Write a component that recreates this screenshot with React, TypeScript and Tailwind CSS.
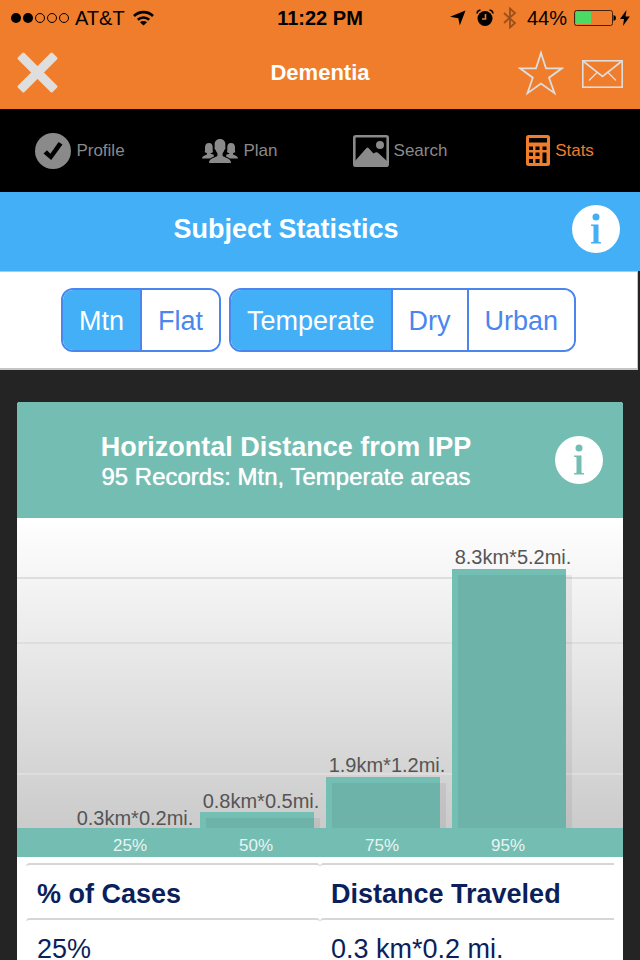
import { useState } from "react";

const tabs = [
  { name: "Profile", icon: ProfileIcon },
  { name: "Plan", icon: PlanIcon },
  { name: "Search", icon: SearchIcon },
  { name: "Stats", icon: StatsIcon },
];

const bars = [
  { x: 57, top: 310, label: "0.3km*0.2mi.", labelY: 307, tick: "25%" },
  { x: 183, top: 294, label: "0.8km*0.5mi.", labelY: 290, tick: "50%" },
  { x: 309, top: 259, label: "1.9km*1.2mi.", labelY: 254, tick: "75%" },
  { x: 435, top: 51, label: "8.3km*5.2mi.", labelY: 46, tick: "95%" },
];

const gridLines = [60, 125, 190, 256];
const BASE = 310;

const rows = [{ cases: "25%", distance: "0.3 km*0.2 mi." }];

function ProfileIcon() {
  return (
    <svg width="36" height="36" viewBox="0 0 36 36" aria-hidden="true">
      <circle cx="18" cy="18" r="18" fill="currentColor" />
      <path d="M8.500 20.500l3.500-3.300 3.400 3.500L23.600 9l3.900 2.600L16.200 27z" fill="#000" />
    </svg>
  );
}

function PlanIcon() {
  return (
    <svg width="36" height="24" viewBox="0 0 36 24" fill="currentColor" aria-hidden="true">
      <path d="M7 4c-2.800 0-4 1.800-4 4.500 0 1.700.2 3.300-.3 4.500.8.600 1.500.8 2.300 1v1.200C3.500 16.500.3 16.500 0 19.500h8c1.200-1 2.500-1.300 3.800-1.800v-2L8.700 14.800V14c.8 0 1.800-.4 2.300-1-.5-1.200-.3-2.800-.3-4.500C10.700 5.800 9.800 4 7 4z" />
      <path d="M29 4c2.800 0 4 1.800 4 4.500 0 1.700-.2 3.300.3 4.500-.8.600-1.500.8-2.300 1v1.200c1.500 1.300 4.700 1.300 5 4.300h-8c-1.200-1-2.500-1.300-3.800-1.800v-2l3.100-.9V14c-.8 0-1.800-.4-2.300-1 .5-1.200.3-2.800.3-4.500C25.300 5.800 26.200 4 29 4z" />
      <path d="M18 0c-3.700 0-5.400 2.500-5.400 5.800 0 .8.100 1.500.2 2.200-.9.600 0 2.700.9 3 .4 1.400.9 2.300 1.700 3.200v2.700C13.500 18.700 7 18.700 7 24h22c0-5.300-6.500-5.300-8.400-7.100v-2.700c.8-.9 1.300-1.800 1.700-3.200.9-.3 1.800-2.400.9-3 .1-.7.200-1.400.2-2.200C23.400 2.500 21.700 0 18 0z" />
    </svg>
  );
}

function SearchIcon() {
  return (
    <svg width="36" height="32" viewBox="0 0 36 32" aria-hidden="true">
      <rect x="1.300" y="1.300" width="33.400" height="29.400" rx="1.500" fill="none" stroke="currentColor" strokeWidth="2.600" />
      <circle cx="27" cy="10" r="4" fill="currentColor" />
      <path d="M2 26l11.500-13q1-1 2 0l5 5.500q1.500-1 2.500-1.300 1.300-.3 2.500 1L34 26v5H2z" fill="currentColor" />
    </svg>
  );
}

function StatsIcon() {
  return (
    <svg width="24" height="31" viewBox="0 0 24 31" aria-hidden="true">
      <rect width="24" height="31" rx="2.500" fill="currentColor" />
      <g fill="#000">
        <rect x="3" y="3" width="18" height="4.500" />
        <rect x="3" y="11.500" width="4" height="3.500" />
        <rect x="9.500" y="11.500" width="4" height="3.500" />
        <rect x="16.500" y="11.500" width="4" height="3.500" />
        <rect x="3" y="17.500" width="4" height="3.500" />
        <rect x="9.500" y="17.500" width="4" height="3.500" />
        <rect x="3" y="24" width="4" height="4" />
        <rect x="9.500" y="24" width="4" height="4" />
        <rect x="16.500" y="17.500" width="4" height="10.500" />
      </g>
    </svg>
  );
}

const StatusBar = () => (
  <div className="grid h-9 grid-cols-[1fr_auto_1fr] items-center px-[10px] text-xl text-black">
    <div className="flex items-center">
      <svg width="60" height="12" viewBox="0 0 60 12" aria-hidden="true">
        <circle cx="6" cy="6" r="5" />
        <circle cx="18" cy="6" r="5" />
        <g fill="none" stroke="#000">
          <circle cx="30" cy="6" r="4.500" />
          <circle cx="42" cy="6" r="4.500" />
          <circle cx="54" cy="6" r="4.500" />
        </g>
      </svg>
      <span className="ml-[5px]">AT&amp;T</span>
      <svg className="ml-2" width="21" height="16" viewBox="0 0 21 16" aria-hidden="true">
        <g fill="none" stroke="#000" strokeWidth="2.600">
          <path d="M1 6C6 .8 15 .8 20 6" />
          <path d="M4.800 9.800c3.100-3 8.300-3 11.400 0" />
        </g>
        <path d="M10.500 15.500L7 12.200c1.800-1.600 5.200-1.600 7 0z" />
      </svg>
    </div>
    <span className="font-bold">11:22 PM</span>
    <div className="flex items-center justify-end">
      <svg width="16" height="16" viewBox="0 0 16 16" aria-hidden="true">
        <path d="M15.500.5L9.800 15.500 8.300 8.200 0 6.800z" />
      </svg>
      <svg className="ml-[10px]" width="18" height="18" viewBox="0 0 18 18" aria-hidden="true">
        <circle cx="9" cy="9.500" r="7.500" />
        <path d="M1 4.500A4 4 0 0 1 4.500 1M17 4.500A4 4 0 0 0 13.500 1" fill="none" stroke="#000" strokeWidth="1.600" />
        <path d="M9.500 5v5H6" fill="none" stroke="#ef7d2b" strokeWidth="1.600" />
      </svg>
      <svg className="ml-[9px]" width="14" height="22" viewBox="0 0 14 22" fill="none" stroke="#98501c" strokeWidth="1.800" aria-hidden="true">
        <path d="M1 6l11 10-5 4.500V1.500L12 6 1 16" />
      </svg>
      <span className="ml-[10px]">44%</span>
      <svg className="ml-[7px]" width="43" height="18" viewBox="0 0 43 18" aria-hidden="true">
        <rect x=".5" y="1.500" width="38" height="15" rx="2" fill="none" stroke="#3f2210" />
        <rect x="2" y="3" width="15" height="12" fill="#4cd964" />
        <path d="M39.500 6q2.500.5 2.500 3t-2.500 3z" />
      </svg>
      <svg className="ml-[3px]" width="10" height="16" viewBox="0 0 10 16" aria-hidden="true">
        <path d="M6.500 0L0 9h4L3 16l6.800-9.500H5.500z" />
      </svg>
    </div>
  </div>
);

const TitleBar = () => (
  <div className="grid h-[73px] grid-cols-[1fr_auto_1fr] items-center px-[17px] text-[#dedede]">
    <button type="button" aria-label="Close" className="justify-self-start">
      <svg width="41" height="41" viewBox="0 0 41 41" aria-hidden="true">
        <g fill="currentColor" transform="rotate(45 20.500 20.500)">
          <rect x="-4" y="16" width="49" height="9" rx="1.500" />
          <rect x="16" y="-4" width="9" height="49" rx="1.500" />
        </g>
      </svg>
    </button>
    <h1 className="text-[22px] font-bold text-white">Dementia</h1>
    <div className="flex items-center justify-self-end gap-[18px]">
      <button type="button" aria-label="Favorite">
        <svg width="46" height="46" viewBox="0 0 46 46" fill="none" stroke="currentColor" strokeWidth="1.800" aria-hidden="true">
          <path d="M23 3l5 15.300h16l-13 9.400 5.500 15.500L23 33.500 9.500 43.200l5.300-15.500L2 18.300h16z" />
        </svg>
      </button>
      <button type="button" aria-label="Send mail" className="pt-[3px]">
        <svg width="41" height="28" viewBox="0 0 41 28" fill="none" stroke="currentColor" strokeWidth="1.600" aria-hidden="true">
          <rect x=".8" y=".8" width="39.400" height="26.400" />
          <path d="M1 1l19.500 15.500L40 1" />
          <path d="M7 20.500l8-8M34 20.500l-8-8" strokeWidth="1.200" />
        </svg>
      </button>
    </div>
  </div>
);

const InfoButton = ({ label, color }: { label: string; color: string }) => (
  <button
    type="button"
    aria-label={label}
    className={`flex size-12 shrink-0 items-center justify-center rounded-full bg-white ${color}`}
  >
    <svg width="12" height="32" viewBox="0 0 12 32" fill="currentColor" aria-hidden="true">
      <circle cx="6" cy="4" r="3.500" />
      <path d="M1 11.500h7.500v17.300l2.500.500V30.500H1v-1.200l2.500-.5V13.200L1 12.700z" />
    </svg>
  </button>
);

type SegmentedProps = {
  label: string;
  options: string[];
  value: string;
  onChange: (value: string) => void;
};

const Segmented = ({ label, options, value, onChange }: SegmentedProps) => (
  <div
    role="group"
    aria-label={label}
    className="flex h-16 divide-x-2 divide-[#4a86ee] overflow-hidden rounded-xl border-2 border-[#4a86ee]"
  >
    {options.map((option) => (
      <button
        key={option}
        type="button"
        aria-pressed={option === value}
        onClick={() => onChange(option)}
        className={`px-4 pt-[2px] text-[27px] ${option === value ? "bg-[#43aff7] text-white" : "bg-white text-[#4a86ee]"}`}
      >
        {option}
      </button>
    ))}
  </div>
);

const DistanceChart = () => (
  <svg viewBox="0 0 606 339" className="block w-full" role="img" aria-label="Horizontal distance from IPP">
    <defs>
      <linearGradient id="chartBg" x1="0" y1="0" x2="0" y2="1">
        <stop offset="0" stopColor="#ffffff" />
        <stop offset="1" stopColor="#c6c6c6" />
      </linearGradient>
    </defs>
    <rect width="606" height="339" fill="url(#chartBg)" />
    {gridLines.map((y) => (
      <rect key={y} y={y - 1} width="606" height="2" fill="#dedede" />
    ))}
    {bars.map((bar) => (
      <g key={bar.tick}>
        <rect x={bar.x} y={bar.top} width="114" height={BASE - bar.top} fill="#74bfb4" />
        <rect x={bar.x + 6} y={bar.top + 6} width="114" height={Math.max(BASE - bar.top - 6, 0)} fill="#000" opacity=".06" />
      </g>
    ))}
    <rect y={BASE} width="606" height="29" fill="#74bdb2" />
    {bars.map((bar) => (
      <g key={bar.tick} textAnchor="middle">
        <text x={bar.x + 61} y={bar.labelY} fontSize="20" fill="#555">
          {bar.label}
        </text>
        <text x={bar.x + 56} y="333" fontSize="17" fill="#e6f5f2">
          {bar.tick}
        </text>
      </g>
    ))}
  </svg>
);

const App = () => {
  const [tab, setTab] = useState("Stats");
  const [terrain, setTerrain] = useState("Mtn");
  const [climate, setClimate] = useState("Temperate");

  return (
    <div className="flex h-dvh flex-col bg-[#242424] font-['Liberation_Sans',Arial,sans-serif]">
      <header className="shrink-0 bg-[#ef7d2b]">
        <StatusBar />
        <TitleBar />
      </header>

      <nav className="grid h-[83px] shrink-0 grid-cols-4 bg-black">
        {tabs.map(({ name, icon: Icon }) => (
          <button
            key={name}
            type="button"
            onClick={() => setTab(name)}
            className={`flex items-center justify-center gap-[5px] text-[17px] ${name === tab ? "text-[#ef7d2b]" : "text-[#8a8a8a]"}`}
          >
            <Icon />
            {name}
          </button>
        ))}
      </nav>

      <main className="min-h-0 flex-1 overflow-y-auto [scrollbar-width:none]">
        <div className="flex h-[79px] items-center bg-[#43aff7] pr-5 pb-[6px]">
          <h2 className="flex-1 pt-[2px] text-center text-[27px] font-bold text-white">Subject Statistics</h2>
          <InfoButton label="About subject statistics" color="text-[#43aff7]" />
        </div>

        <div className="mr-[2px] flex justify-center gap-2 border-t border-r border-b-2 border-[#c4c4c4] bg-white py-4">
          <Segmented label="Terrain" options={["Mtn", "Flat"]} value={terrain} onChange={setTerrain} />
          <Segmented
            label="Climate"
            options={["Temperate", "Dry", "Urban"]}
            value={climate}
            onChange={setClimate}
          />
        </div>

        {/* Horizontal distance card */}
        <section className="mx-[17px] mt-8 overflow-hidden rounded-t-[3px] bg-white">
          <div className="flex h-[116px] items-center bg-[#74bdb2] pr-5 text-white">
            <div className="flex-1 pt-[2px] text-center">
              <h3 className="text-[27px] leading-8 font-bold">Horizontal Distance from IPP</h3>
              <p className="text-2xl leading-7 [text-shadow:0_0_1px_currentColor]">
                95 Records: {terrain}, {climate} areas
              </p>
            </div>
            <InfoButton label="About horizontal distance" color="text-[#74bdb2]" />
          </div>

          <DistanceChart />

          <div className="px-[9px] pt-[6px]">
            <table className="w-full table-fixed border-separate border-spacing-0 text-left text-[27px] leading-6 text-[#0b1f5c]">
              <thead>
                <tr>
                  <th className="h-[55px] rounded-t-[4px] border-t-2 border-[#d6d6d6] px-[11px] pt-1 font-bold">% of Cases</th>
                  <th className="h-[55px] rounded-tl-[4px] border-t-2 border-[#d6d6d6] px-[11px] pt-1 font-bold">Distance Traveled</th>
                </tr>
              </thead>
              <tbody>
                {rows.map((row) => (
                  <tr key={row.cases}>
                    <td className="h-[55px] rounded-t-[4px] border-t-2 border-[#d6d6d6] px-[11px] pt-1">{row.cases}</td>
                    <td className="h-[55px] rounded-tl-[4px] border-t-2 border-[#d6d6d6] px-[11px] pt-1">{row.distance}</td>
                  </tr>
                ))}
              </tbody>
            </table>
          </div>
        </section>
      </main>
    </div>
  );
};

export default App;
